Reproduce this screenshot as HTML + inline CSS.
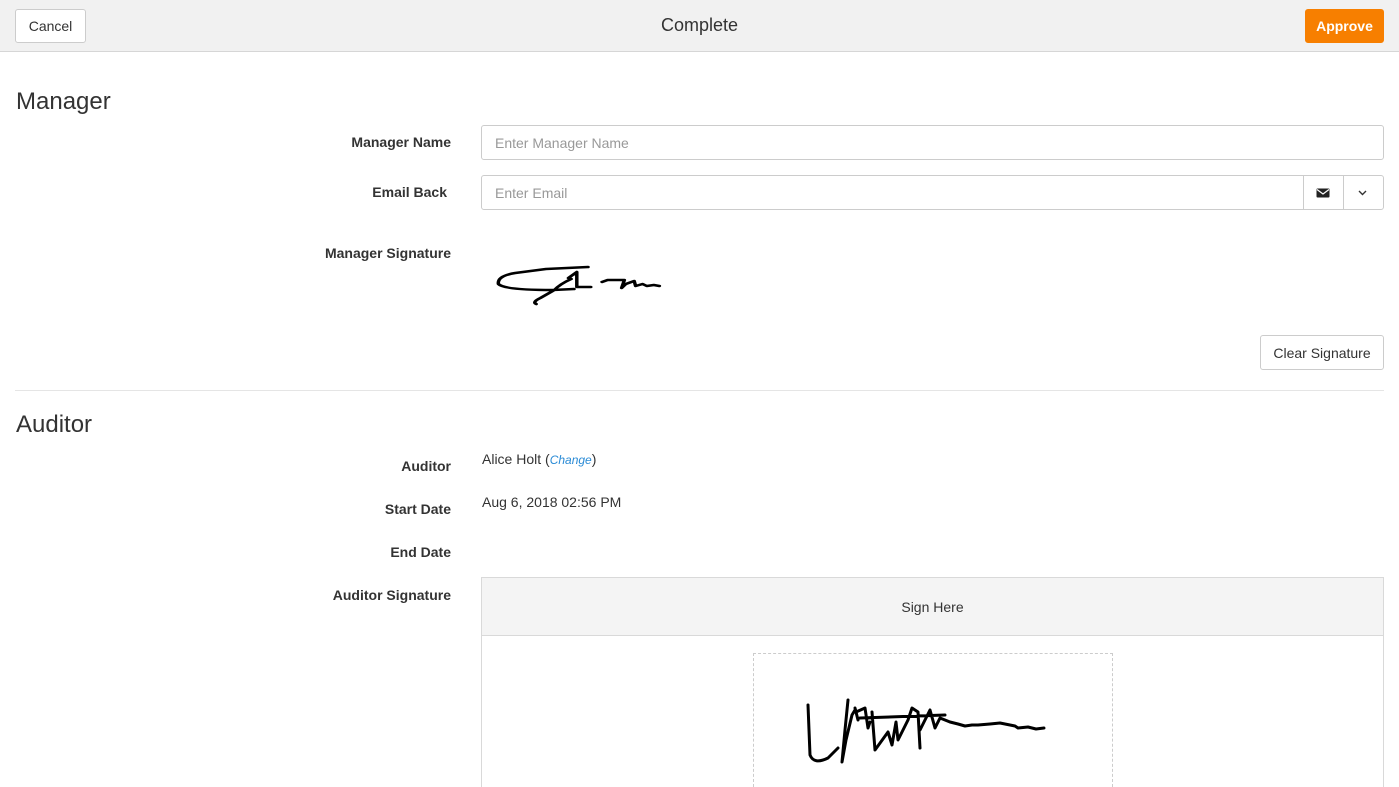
<!DOCTYPE html><html><head><style>
*{box-sizing:border-box;margin:0;padding:0}
html,body{width:1399px;height:787px;overflow:hidden}
body{background:#fff;font-family:"Liberation Sans",sans-serif;color:#333;position:relative}
.a{position:absolute}
.hdr{left:0;top:0;width:1399px;height:52px;background:#f1f1f1;border-bottom:1px solid #d6d6d6}
.btn{border:1px solid #ccc;border-radius:3px;background:#fff;font-size:14px;display:flex;align-items:center;justify-content:center;color:#333}
.lbl{font-size:14px;font-weight:bold;text-align:right;width:300px;left:151px;color:#333}
.inp{border:1px solid #ccc;border-radius:3px;background:#fff;font-size:14px;color:#999;padding-left:13px;display:flex;align-items:center}
h2{font-weight:normal;font-size:24px;color:#333}
.val{font-size:14px;left:482px;color:#333}
</style></head><body>
<div class="a hdr"></div>
<div class="a btn" style="left:15px;top:9px;width:71px;height:34px">Cancel</div>
<div class="a" style="left:0;width:1399px;top:15px;text-align:center;font-size:18px;color:#333">Complete</div>
<div class="a btn" style="left:1305px;top:9px;width:79px;height:34px;background:#f77f00;border-color:#f77f00;color:#fff;font-weight:bold">Approve</div>

<h2 class="a" style="left:16px;top:88px">Manager</h2>
<div class="a lbl" style="top:134px">Manager Name</div>
<div class="a inp" style="left:481px;top:125px;width:903px;height:35px">Enter Manager Name</div>
<div class="a lbl" style="top:184px;left:147px">Email Back</div>
<div class="a inp" style="left:481px;top:175px;width:903px;height:35px">Enter Email</div>
<div class="a" style="left:1303px;top:176px;width:1px;height:33px;background:#ccc"></div>
<div class="a" style="left:1343px;top:176px;width:1px;height:33px;background:#ccc"></div>
<svg class="a" style="left:1316px;top:188px" width="14" height="10" viewBox="0 0 14 10"><rect x="0.5" y="0.5" width="13" height="9" rx="1" fill="#222"/><path d="M1 1.5L7 6L13 1.5" stroke="#fff" stroke-width="1.2" fill="none"/></svg>
<svg class="a" style="left:1358px;top:190px" width="9" height="6" viewBox="0 0 9 6"><path d="M1 1L4.5 4.5L8 1" stroke="#333" stroke-width="1.4" fill="none"/></svg>
<div class="a lbl" style="top:245px">Manager Signature</div>
<svg class="a" style="left:490px;top:262px" width="175" height="48" viewBox="0 0 125 48" preserveAspectRatio="none"><path d="M70 5L40 7L18 11Q5 14 6 22Q10 28 45 28L60 27M58 17Q50 22 46 28L36 36Q30 40 33 42M56 16L62 10L62 25L72 25M80 20L84 18L96 18L94 26L97 22L103 19L104 24L109 22L112 24L117 23L121 24" stroke="#000" stroke-width="2.5" fill="none" stroke-linecap="round" stroke-linejoin="round"/></svg>
<div class="a btn" style="left:1260px;top:335px;width:124px;height:35px">Clear Signature</div>
<div class="a" style="left:15px;top:390px;width:1369px;height:1px;background:#e5e5e5"></div>

<h2 class="a" style="left:16px;top:411px">Auditor</h2>
<div class="a lbl" style="top:458px">Auditor</div>
<div class="a val" style="top:451px">Alice Holt (<i style="color:#2a8bd6;font-size:12px">Change</i>)</div>
<div class="a lbl" style="top:501px">Start Date</div>
<div class="a val" style="top:494px">Aug 6, 2018 02:56 PM</div>
<div class="a lbl" style="top:544px">End Date</div>
<div class="a lbl" style="top:587px">Auditor Signature</div>
<div class="a" style="left:481px;top:577px;width:903px;height:210px;border:1px solid #d9d9d9;border-bottom:none"></div>
<div class="a" style="left:482px;top:578px;width:901px;height:58px;background:#f4f4f4;border-bottom:1px solid #d9d9d9;font-size:14px;display:flex;align-items:center;justify-content:center;color:#333">Sign Here</div>
<div class="a" style="left:753px;top:653px;width:360px;height:134px;border:1px dashed #ccc;border-bottom:none"></div>
<svg class="a" style="left:800px;top:690px" width="250" height="80" viewBox="0 0 250 80"><path d="M8 15L10 65Q14 75 28 68L38 58M48 10L45 40L42 72L46 50L52 25L55 20M55 18L58 30M56 22L65 18L68 38L70 32M60 28L145 25M72 22L75 60L88 42L92 55L96 32L98 50L108 30L112 18L118 22L120 58M120 40L130 20L135 38L140 28L150 32L158 34L165 36L172 35L178 35L190 34L200 33L210 35L215 36L218 38L228 37L236 39L244 38" stroke="#000" stroke-width="3" fill="none" stroke-linecap="round" stroke-linejoin="round"/></svg>
</body></html>
